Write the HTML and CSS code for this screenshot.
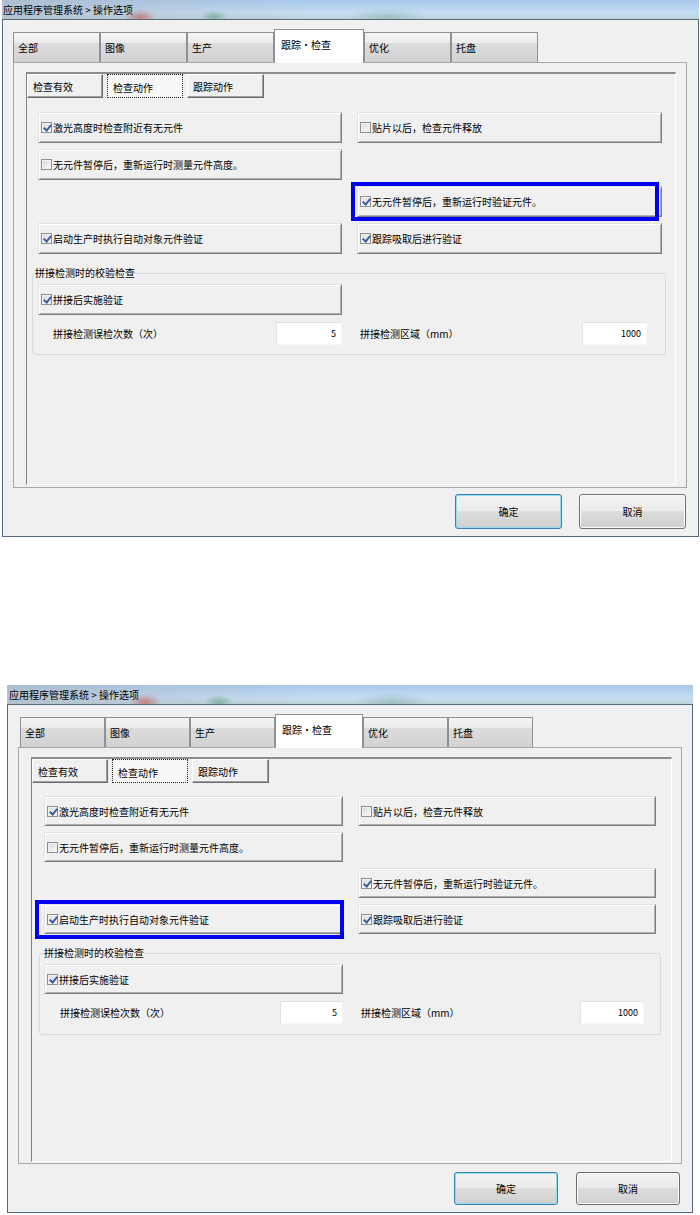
FILE: index.html
```html
<!DOCTYPE html>
<html lang="zh-CN">
<head>
    <meta charset="UTF-8">
    <title>操作选项</title>
    <link rel="stylesheet" href="styles.css">
</head>
<body>

<div class="dialog">
    <div class="titlebar">应用程序管理系统 &gt; 操作选项</div>
    <div class="frame">
        <div class="tabs">
            <div class="tab">全部</div>
            <div class="tab">图像</div>
            <div class="tab">生产</div>
            <div class="tab active">跟踪・检查</div>
            <div class="tab">优化</div>
            <div class="tab">托盘</div>
        </div>
        <div class="page">
            <div class="subpage">
                <div class="subtabs">
                    <div class="subtab">检查有效</div>
                    <div class="subtab current">检查动作</div>
                    <div class="subtab">跟踪动作</div>
                </div>
                <div class="options">
                    <div class="opt"><span class="box on"></span>激光高度时检查附近有无元件</div>
                    <div class="opt"><span class="box"></span>贴片以后，检查元件释放</div>
                    <div class="opt"><span class="box"></span>无元件暂停后，重新运行时测量元件高度。</div>
                    <div></div>
                    <div></div>
                    <div class="opt"><span class="box on"></span>无元件暂停后，重新运行时验证元件。<span class="mark"></span></div>
                    <div class="opt"><span class="box on"></span>启动生产时执行自动对象元件验证</div>
                    <div class="opt"><span class="box on"></span>跟踪吸取后进行验证</div>
                </div>
                <fieldset class="group">
                    <legend>拼接检测时的校验检查</legend>
                    <div class="options single">
                        <div class="opt"><span class="box on"></span>拼接后实施验证</div>
                    </div>
                    <div class="fields">
                        <div class="field"><span>拼接检测误检次数（次）</span><input class="num" type="text" value="5" readonly></div>
                        <div class="field right"><span>拼接检测区域（mm）</span><input class="num" type="text" value="1000" readonly></div>
                    </div>
                </fieldset>
            </div>
        </div>
        <div class="actions">
            <button class="btn default">确定</button>
            <button class="btn">取消</button>
        </div>
    </div>
</div>

<div class="dialog dialog-b">
    <div class="titlebar">应用程序管理系统 &gt; 操作选项</div>
    <div class="frame">
        <div class="tabs">
            <div class="tab">全部</div>
            <div class="tab">图像</div>
            <div class="tab">生产</div>
            <div class="tab active">跟踪・检查</div>
            <div class="tab">优化</div>
            <div class="tab">托盘</div>
        </div>
        <div class="page">
            <div class="subpage">
                <div class="subtabs">
                    <div class="subtab">检查有效</div>
                    <div class="subtab current">检查动作</div>
                    <div class="subtab">跟踪动作</div>
                </div>
                <div class="options">
                    <div class="opt"><span class="box on"></span>激光高度时检查附近有无元件</div>
                    <div class="opt"><span class="box"></span>贴片以后，检查元件释放</div>
                    <div class="opt"><span class="box"></span>无元件暂停后，重新运行时测量元件高度。</div>
                    <div></div>
                    <div></div>
                    <div class="opt"><span class="box on"></span>无元件暂停后，重新运行时验证元件。</div>
                    <div class="opt"><span class="box on"></span>启动生产时执行自动对象元件验证<span class="mark"></span></div>
                    <div class="opt"><span class="box on"></span>跟踪吸取后进行验证</div>
                </div>
                <fieldset class="group">
                    <legend>拼接检测时的校验检查</legend>
                    <div class="options single">
                        <div class="opt"><span class="box on"></span>拼接后实施验证</div>
                    </div>
                    <div class="fields">
                        <div class="field"><span>拼接检测误检次数（次）</span><input class="num" type="text" value="5" readonly></div>
                        <div class="field right"><span>拼接检测区域（mm）</span><input class="num" type="text" value="1000" readonly></div>
                    </div>
                </fieldset>
            </div>
        </div>
        <div class="actions">
            <button class="btn default">确定</button>
            <button class="btn">取消</button>
        </div>
    </div>
</div>

</body>
</html>
```

FILE: styles.css
```css
* {
    box-sizing: border-box;
}
body {
    margin: 0;
    background: #fff;
    font-family: "Noto Sans CJK SC", "Noto Sans", sans-serif;
    font-size: 10px;
    color: #000;
}

/* sizes of the first screenshot; the second one is a bit smaller */
.dialog {
    --left: 2px;
    --width: 697px;
    --title-x: 1px;
    --tabs-x: 0px;
    --tab-w: 87px;
    --page-w: 674px;
    --page-h: 426px;
    --sub-w: 650px;
    --sub-h: 413px;
    --opt-x: 11px;
    --opt-top: 14px;
    --col-l: 304px;
    --col-r: 305px;
    --row-h: 31px;
    --group-x: -6px;
    --group-w: 634px;
    --group-pad: 5px;
    --legend-x: -3px;
    --group-bottom: 9px;
    --field-l: 15px;
    --field-w: 66px;
    --field-r: 15px;
    --field-w2: 65px;
    --btn-w: 107px;
    --btn-h: 35px;
    --btn-gap: 17px;
    --actions-top: 6px;
    width: var(--width);
    margin-left: var(--left);
}
.dialog-b {
    --left: 7px;
    --width: 686px;
    --title-x: 2px;
    --tabs-x: 2px;
    --tab-w: 85px;
    --page-w: 664px;
    --page-h: 417px;
    --sub-w: 641px;
    --sub-h: 405px;
    --opt-x: 12px;
    --opt-top: 13px;
    --col-l: 299px;
    --col-r: 298px;
    --row-h: 30px;
    --group-x: -5px;
    --group-w: 622px;
    --group-pad: 4px;
    --legend-x: 0px;
    --group-bottom: 10px;
    --field-l: 16px;
    --field-w: 63px;
    --field-r: 12px;
    --field-w2: 64px;
    --btn-w: 104px;
    --btn-h: 33px;
    --btn-gap: 18px;
    --actions-top: 8px;
    margin-top: 148px;
}

.titlebar {
    height: 20px;
    padding-left: var(--title-x);
    line-height: 19px;
    border-bottom: 1px solid #56687a;
    background:
        radial-gradient(16px 8px at 138px 17px, rgba(196, 70, 70, 0.55), transparent),
        radial-gradient(14px 7px at 212px 17px, rgba(60, 140, 90, 0.45), transparent),
        radial-gradient(40px 9px at 385px 17px, rgba(90, 140, 120, 0.3), transparent),
        linear-gradient(to right, rgba(175, 185, 196, 0.7), rgba(175, 185, 196, 0) 45%),
        linear-gradient(#a7c9ec, #c6ddf2 70%, #bcd2d9);
}
.frame {
    background: #f0f0f0;
    border: 1px solid #56687a;
    border-top: none;
    padding: 9px 12px 7px 10px;
}

.tabs {
    display: flex;
    align-items: flex-end;
    padding-left: var(--tabs-x);
    position: relative;
    z-index: 1;
}
.tab {
    width: var(--tab-w);
    height: 30px;
    padding-left: 4px;
    display: flex;
    align-items: center;
    border: 1px solid #8e9097;
    border-bottom: none;
    background: linear-gradient(#f4f4f4, #ececec 34%, #dcdcdc 36%, #d2d2d2);
}
.tab + .tab {
    margin-left: 0;
}
.tab.active {
    width: calc(var(--tab-w) + 3px);
    height: 34px;
    margin-bottom: -1px;
    padding: 0 0 4px 6px;
    background: #fff;
}

.page {
    width: var(--page-w);
    height: var(--page-h);
    border: 1px solid #a7a9b0;
    background: #f0f0f0;
    padding: 9px 0 0 12px;
}
.subpage {
    width: var(--sub-w);
    height: var(--sub-h);
    border-top: 2px solid #8c8c8c;
    border-left: 1px solid #808080;
    border-right: 1px solid #fff;
    border-bottom: 1px solid #fff;
}

.subtabs {
    display: flex;
    gap: 4px;
}
.subtab {
    width: 76px;
    height: 24px;
    padding-left: 5px;
    display: flex;
    align-items: center;
    border: 1px solid;
    border-color: #fff #6d6d6d #6d6d6d #fff;
    box-shadow: inset -1px -1px #a0a0a0;
}
.subtab:last-child {
    width: 77px;
}
.subtab.current {
    border: 1px dotted #222;
    box-shadow: none;
    background: #f8f8f8;
    padding: 2px 0 0 5px;
}

.options {
    display: grid;
    grid-template-columns: var(--col-l) var(--col-r);
    grid-auto-rows: var(--row-h);
    column-gap: 15px;
    row-gap: 6px;
    margin-top: var(--opt-top);
    padding-left: var(--opt-x);
}
.options.single {
    margin-top: 0;
    padding-left: 0;
}
.opt {
    position: relative;
    display: flex;
    align-items: center;
    white-space: nowrap;
    border: 1px solid;
    border-color: #e2e2e2 #7e7e7e #7e7e7e #e2e2e2;
    box-shadow: inset 1px 1px #fff, inset -1px -1px #b0b0b0;
}
.box {
    position: relative;
    flex: none;
    width: 11px;
    height: 11px;
    margin: 0 1px 0 2px;
    border: 1px solid #8e8f8f;
    background: linear-gradient(135deg, #d9d9d9, #fbfbfb);
    box-shadow: inset 0 0 0 1px #f1f1f1;
}
.box.on::after {
    content: "";
    position: absolute;
    left: 3px;
    top: 0;
    width: 3px;
    height: 6px;
    border: solid #3d5aa2;
    border-width: 0 2px 2px 0;
    transform: rotate(40deg);
}

/* blue annotation box drawn over one option */
.mark {
    position: absolute;
    left: -7px;
    top: -5px;
    width: 308px;
    height: 39px;
    border: 4px solid #0000f2;
}
.dialog-b .mark {
    left: -10px;
    width: 309px;
}

.group {
    width: var(--group-w);
    margin: 13px 0 0 calc(var(--opt-x) + var(--group-x));
    padding: 5px 0 var(--group-bottom) var(--group-pad);
    border: 1px solid #d5dde3;
    border-radius: 3px;
    min-inline-size: 0;
}
.group legend {
    margin-left: var(--legend-x);
    padding: 0;
    line-height: 12px;
}
.fields {
    display: grid;
    grid-template-columns: var(--col-l) var(--col-r);
    column-gap: 15px;
    margin-top: 7px;
}
.field {
    display: flex;
    align-items: center;
    justify-content: space-between;
    padding-left: var(--field-l);
}
.field.right {
    padding-left: 3px;
    padding-right: var(--field-r);
}
.num {
    width: var(--field-w);
    height: 23px;
    padding: 0 5px 0 0;
    font-family: inherit;
    font-size: 9px;
    text-align: right;
    background: #fff;
    border: 1px solid;
    border-color: #e2e2e2 #f7f7f7 #f7f7f7 #e2e2e2;
    outline: none;
}
.field.right .num {
    width: var(--field-w2);
}

.actions {
    display: flex;
    justify-content: flex-end;
    gap: var(--btn-gap);
    margin-top: var(--actions-top);
}
.btn {
    width: var(--btn-w);
    height: var(--btn-h);
    font-family: inherit;
    font-size: 10px;
    color: #000;
    border: 1px solid #707070;
    border-radius: 3px;
    background: linear-gradient(#f2f2f2, #ebebeb 49%, #dddddd 50%, #cfcfcf);
    box-shadow: inset 0 0 0 1px #fbfbfb;
}
.btn.default {
    border-color: #3c7fb1;
    box-shadow: inset 0 0 0 1px #8fdcf6;
}
```
